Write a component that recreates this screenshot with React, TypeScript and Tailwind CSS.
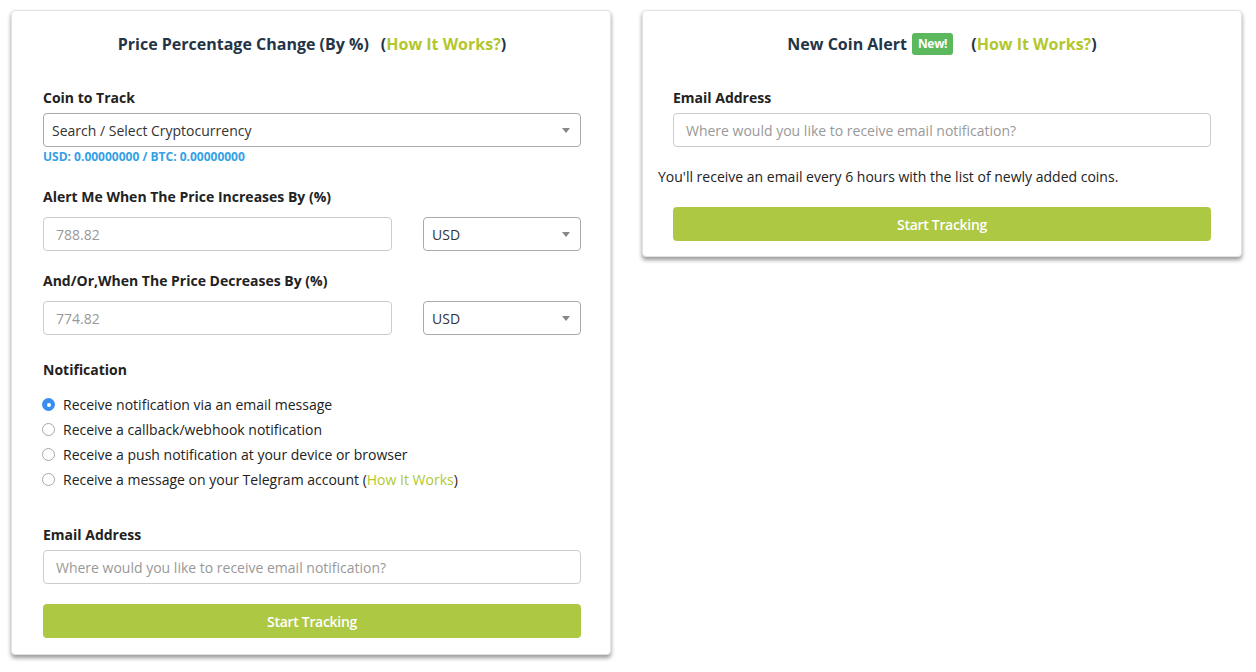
import React from "react";

const Caret = () => (
  <svg width="8" height="5" viewBox="0 0 8 5" className="absolute right-[10px] top-[14px]">
    <path d="M0 0 L8 0 L4 5 Z" fill="#888" />
  </svg>
);

const Radio = ({ checked }: { checked?: boolean }) =>
  checked ? (
    <span className="w-[13px] h-[13px] rounded-full bg-[#3b8eef] flex items-center justify-center shrink-0">
      <span className="w-[4px] h-[4px] rounded-full bg-white" />
    </span>
  ) : (
    <span className="w-[13px] h-[13px] rounded-full border border-[#a8a8a8] bg-white shrink-0" />
  );

const Label = ({ children, className = "" }: { children: React.ReactNode; className?: string }) => (
  <div className={`text-[14px] leading-[20px] font-bold text-[#222] ${className}`}>{children}</div>
);

const Link = ({ children }: { children: React.ReactNode }) => (
  <span className="text-[#b3c72d]">{children}</span>
);

export default function App() {
  return (
    <div
      className="w-[1256px] h-[672px] bg-white flex items-start gap-[31px] pl-[11px] pt-[10px]"
      style={{ fontFamily: '"Open Sans", sans-serif' }}
    >
      {/* Card 1 */}
      <div className="w-[600px] bg-white border border-[#e2e2e2] rounded-[4px] shadow-[0_3px_4px_rgba(0,0,0,0.4)] pl-[31px] pr-[29px] pt-[22px] pb-[16px]">
        <div className="text-center text-[16px] leading-[22px] font-bold text-[#243447]">
          Price Percentage Change (By %)
          <span className="ml-[12px]">
            (<Link>How It Works?</Link>)
          </span>
        </div>

        <Label className="mt-[33px]">Coin to Track</Label>
        <div className="relative mt-[5px] h-[34px] border border-[#aaa] rounded-[4px] flex items-center pl-[8px] text-[14px] text-[#333]">
          Search / Select Cryptocurrency
          <Caret />
        </div>
        <div className="mt-[1px] text-[12px] leading-[17px] font-bold text-[#34a0e6]">
          USD: 0.00000000 / BTC: 0.00000000
        </div>

        <Label className="mt-[22px]">Alert Me When The Price Increases By (%)</Label>
        <div className="mt-[10px] flex justify-between">
          <div className="w-[349px] h-[34px] border border-[#ccc] rounded-[4px] flex items-center pl-[12px] text-[14px] text-[#999]">
            788.82
          </div>
          <div className="relative w-[158px] h-[34px] border border-[#aaa] rounded-[4px] flex items-center pl-[8px] text-[14px] text-[#333]">
            USD
            <Caret />
          </div>
        </div>

        <Label className="mt-[20px]">And/Or,When The Price Decreases By (%)</Label>
        <div className="mt-[10px] flex justify-between">
          <div className="w-[349px] h-[34px] border border-[#ccc] rounded-[4px] flex items-center pl-[12px] text-[14px] text-[#999]">
            774.82
          </div>
          <div className="relative w-[158px] h-[34px] border border-[#aaa] rounded-[4px] flex items-center pl-[8px] text-[14px] text-[#333]">
            USD
            <Caret />
          </div>
        </div>

        <Label className="mt-[25px]">Notification</Label>
        <div className="mt-[12px] flex flex-col text-[14px] text-[#222]">
          <div className="h-[25px] flex items-center gap-[8px] -ml-[1px]">
            <Radio checked />
            <span>Receive notification via an email message</span>
          </div>
          <div className="h-[25px] flex items-center gap-[8px] -ml-[1px]">
            <Radio />
            <span>Receive a callback/webhook notification</span>
          </div>
          <div className="h-[25px] flex items-center gap-[8px] -ml-[1px]">
            <Radio />
            <span>Receive a push notification at your device or browser</span>
          </div>
          <div className="h-[25px] flex items-center gap-[8px] -ml-[1px]">
            <Radio />
            <span>
              Receive a message on your Telegram account (<Link>How It Works</Link>)
            </span>
          </div>
        </div>

        <Label className="mt-[33px]">Email Address</Label>
        <div className="mt-[5px] h-[34px] border border-[#ccc] rounded-[4px] flex items-center pl-[12px] text-[14px] text-[#999]">
          Where would you like to receive email notification?
        </div>
        <div className="mt-[20px] h-[34px] rounded-[4px] bg-[#adc842] flex items-center justify-center text-[14px] font-semibold text-white tracking-[-0.3px]">
          Start Tracking
        </div>
      </div>

      {/* Card 2 */}
      <div className="w-[600px] bg-white border border-[#e2e2e2] rounded-[4px] shadow-[0_3px_4px_rgba(0,0,0,0.4)] pl-[30px] pr-[30px] pt-[22px] pb-[15px]">
        <div className="flex items-center justify-center text-[16px] leading-[22px] font-bold text-[#243447]">
          New Coin Alert
          <span className="ml-[5px] bg-[#5cb85c] text-white text-[12px] leading-[16px] font-bold px-[6px] py-[3px] rounded-[3px] tracking-[-0.3px]">
            New!
          </span>
          <span className="ml-[18px]">
            (<Link>How It Works?</Link>)
          </span>
        </div>

        <Label className="mt-[33px]">Email Address</Label>
        <div className="mt-[5px] h-[34px] border border-[#ccc] rounded-[4px] flex items-center pl-[12px] text-[14px] text-[#999]">
          Where would you like to receive email notification?
        </div>
        <div className="mt-[20px] -ml-[15px] text-[14px] leading-[20px] text-[#222]">
          You'll receive an email every 6 hours with the list of newly added coins.
        </div>
        <div className="mt-[20px] h-[34px] rounded-[4px] bg-[#adc842] flex items-center justify-center text-[14px] font-semibold text-white tracking-[-0.3px]">
          Start Tracking
        </div>
      </div>
    </div>
  );
}
